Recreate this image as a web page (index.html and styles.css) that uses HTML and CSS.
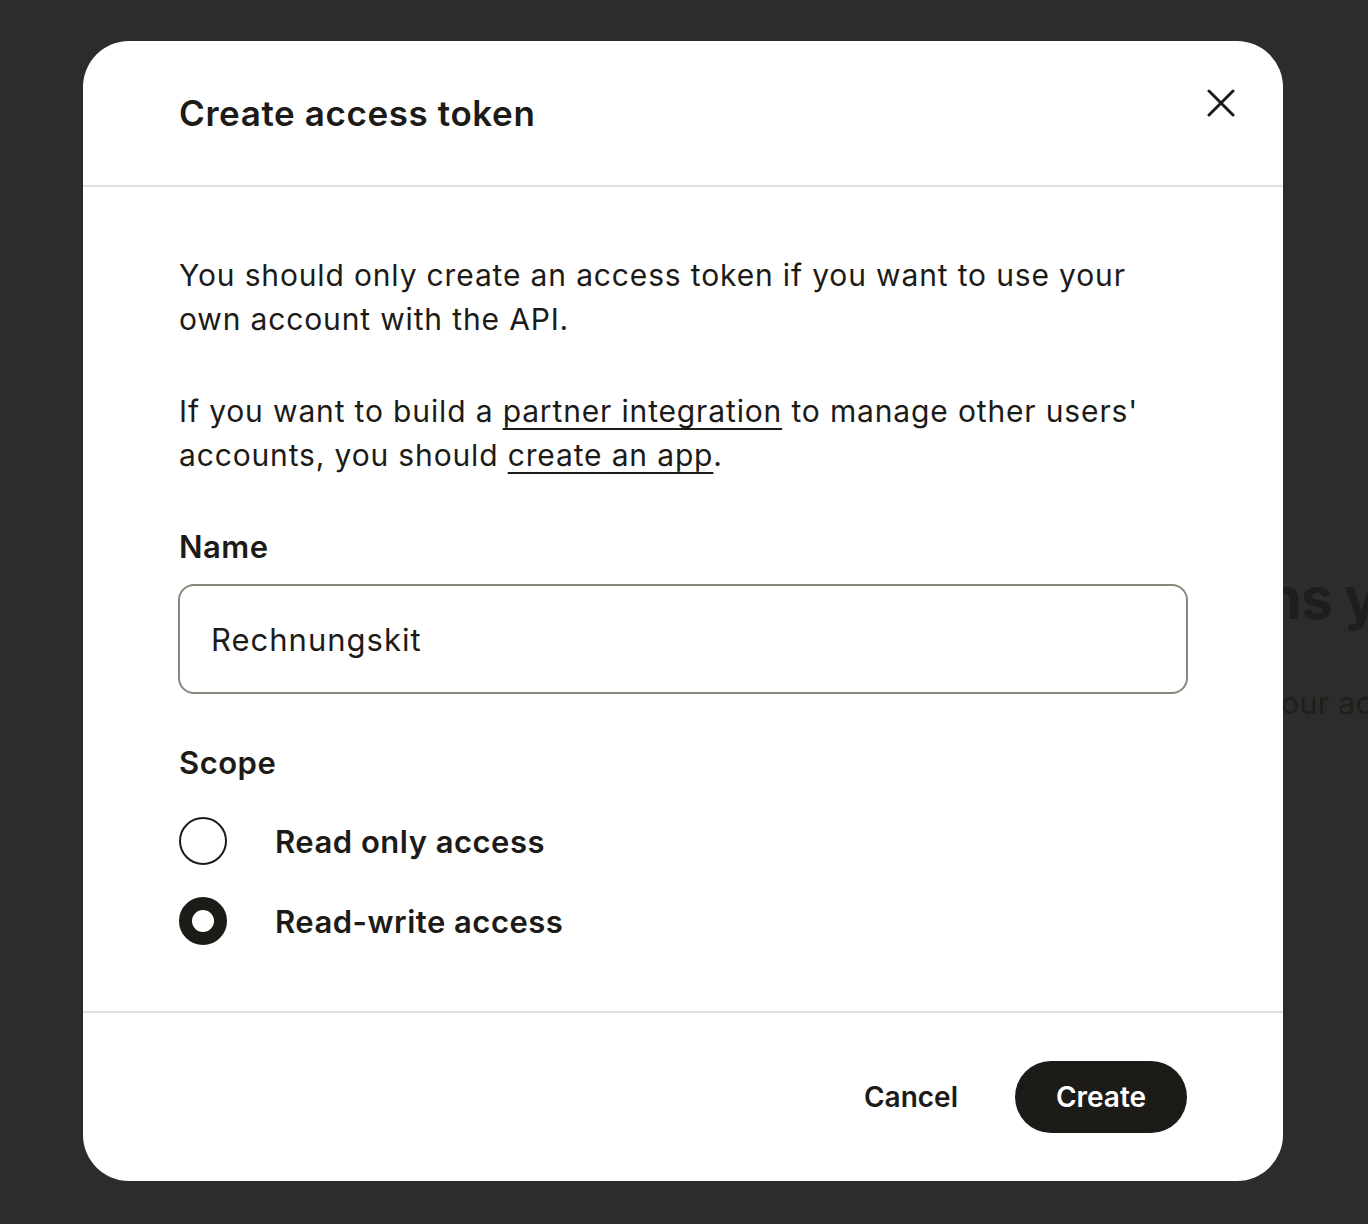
FILE: index.html
```html
<!DOCTYPE html>
<html lang="en">
<head>
<meta charset="utf-8">
<title>Create access token</title>
<link rel="stylesheet" href="styles.css">
</head>
<body>
<div class="page">
  <main class="page-main">
    <h1 class="page-title">Access tokens you've created</h1>
    <p class="page-text">Use tokens to access your account through the API.</p>
  </main>
</div>
<div class="overlay">
  <div class="modal" role="dialog" aria-labelledby="modal-title">
    <header class="modal-header">
      <h2 class="modal-title" id="modal-title">Create access token</h2>
      <button class="close-btn" aria-label="Close">
        <svg width="28" height="28" viewBox="0 0 28 28" fill="none" stroke="#1c1b18" stroke-width="3" stroke-linecap="round"><path d="M2 2L26 26M26 2L2 26"/></svg>
      </button>
    </header>
    <div class="modal-body">
      <p class="text">You should only create an access token if you want to use your own account with the API.</p>
      <p class="text">If you want to build a <a href="#" class="link">partner integration</a> to manage other users' accounts, you should <a href="#" class="link">create an app</a>.</p>
      <label class="field-label" for="name">Name</label>
      <input class="input" id="name" type="text" value="Rechnungskit">
      <div class="field-label scope-label">Scope</div>
      <div class="radios">
        <label class="radio-row"><span class="radio"></span><span class="radio-text">Read only access</span></label>
        <label class="radio-row"><span class="radio radio-checked"></span><span class="radio-text">Read-write access</span></label>
      </div>
    </div>
    <footer class="modal-footer">
      <button class="btn-cancel">Cancel</button>
      <button class="btn-create">Create</button>
    </footer>
  </div>
</div>
</body>
</html>
```
FILE: styles.css
```css
* { box-sizing: border-box; }
html, body { margin: 0; padding: 0; }
body {
  font-family: Inter, "Noto Sans", "Liberation Sans", sans-serif;
  color: #1c1b18;
  background: #ffffff;
  width: 1368px;
  height: 1224px;
  overflow: hidden;
  position: relative;
}
.page { padding: 560px 0 0 936px; }
.page-main { width: 432px; overflow: hidden; }
.page-title {
  margin: 0;
  font-size: 58px;
  font-weight: 700;
  line-height: 76px;
  color: #1c1b18;
  white-space: nowrap;
  letter-spacing: -1.5px;
}
.page-text {
  margin: 47px 0 0 6px;
  font-size: 31px;
  line-height: 40px;
  color: #1c1b18;
  white-space: nowrap;
}
.overlay {
  position: absolute;
  inset: 0;
  background: rgba(32, 31, 29, 0.94);
  display: flex;
  align-items: center;
  justify-content: center;
  padding: 0 2px 2px 0;
}
.modal {
  width: 1200px;
  height: 1140px;
  background: #ffffff;
  border-radius: 46px;
  display: flex;
  flex-direction: column;
  overflow: hidden;
}
.modal-header {
  height: 146px;
  flex: none;
  display: flex;
  align-items: center;
  justify-content: space-between;
  padding: 0 48px 0 96px;
  border-bottom: 2px solid #e1dfda;
}
.modal-title {
  margin: 0;
  font-size: 35px;
  font-weight: 600;
  letter-spacing: 0.6px;
}
.close-btn {
  border: 0;
  background: none;
  padding: 0;
  width: 28px;
  height: 28px;
  margin-top: -20px;
  cursor: pointer;
  display: flex;
}
.modal-body {
  flex: 1;
  padding: 66px 95px 0 96px;
  display: flex;
  flex-direction: column;
}
.text {
  margin: 0 0 48px;
  font-size: 30px;
  line-height: 44px;
  letter-spacing: 0.85px;
}
.text + .text { margin-bottom: 50px; }
.link {
  color: #1c1b18;
  text-decoration: underline;
  text-underline-offset: 6px;
  text-decoration-thickness: 2px;
}
.field-label {
  display: block;
  font-size: 31px;
  font-weight: 600;
  line-height: 40px;
  letter-spacing: 0.5px;
}
.input {
  margin-top: 17px;
  width: 1010px;
  margin-left: -1px;
  height: 110px;
  border: 2px solid #8c877b;
  border-radius: 16px;
  padding: 0 31px;
  font-family: inherit;
  font-size: 31px;
  color: #1c1b18;
  outline: none;
  letter-spacing: 1px;
}
.scope-label { margin-top: 49px; }
.radios {
  margin-top: 34px;
  display: flex;
  flex-direction: column;
  gap: 32px;
}
.radio-row {
  display: flex;
  align-items: center;
  gap: 48px;
  height: 48px;
}
.radio {
  width: 48px;
  height: 48px;
  border-radius: 50%;
  border: 2px solid #1c1b18;
  flex: none;
}
.radio-checked { border-width: 13px; }
.radio-text {
  font-size: 31px;
  font-weight: 600;
  letter-spacing: 0.5px;
}
.modal-footer {
  height: 170px;
  flex: none;
  border-top: 2px solid #e1dfda;
  display: flex;
  align-items: center;
  justify-content: flex-end;
  gap: 57px;
  padding: 0 96px 0 0;
}
.btn-cancel {
  border: 0;
  background: none;
  padding: 0;
  font-family: inherit;
  font-size: 28px;
  font-weight: 600;
  color: #1c1b18;
  letter-spacing: 0;
}
.btn-create {
  width: 172px;
  height: 72px;
  border: 0;
  border-radius: 36px;
  background: #1c1b18;
  color: #ffffff;
  font-family: inherit;
  font-size: 28px;
  font-weight: 600;
  letter-spacing: 0;
}
```
